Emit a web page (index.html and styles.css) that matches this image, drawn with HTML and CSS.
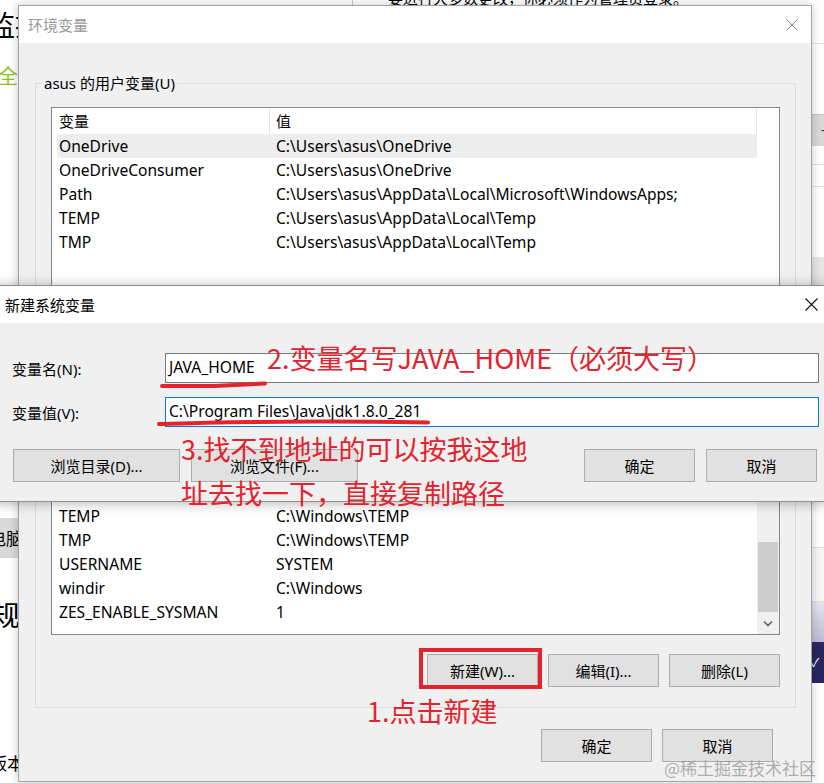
FILE: index.html
```html
<!DOCTYPE html>
<html lang="zh-CN">
<head>
<meta charset="utf-8">
<title>环境变量</title>
<link rel="stylesheet" href="styles.css">
</head>
<body>
<div class="desktop">
  <div class="bg">
    <div class="bg-left">
      <div class="bg-h1">监控</div>
      <div class="bg-link">全</div>
      <div class="bg-tab">电脑</div>
      <div class="bg-h2">常规</div>
      <div class="bg-ver">版本</div>
    </div>
    <div class="bg-mid">
      <div class="bg-notice">要进行大多数更改，你必须作为管理员登录。</div>
    </div>
    <div class="bg-right">
      <div class="br-a"></div>
      <div class="br-gap1"></div>
      <div class="br-btn">-</div>
      <div class="br-gap2"></div>
      <div class="br-line"></div>
      <div class="br-line2"></div>
      <div class="br-band"></div>
      <div class="br-hidden"></div>
      <div class="br-b"></div>
      <div class="br-c"></div>
      <div class="br-lav"></div>
      <div class="br-navy">✓</div>
    </div>
  </div>

  <div class="win env">
    <div class="titlebar">
      <span class="title inactive">环境变量</span>
      <svg class="close close-env" width="12" height="12" viewBox="0 0 12 12"><path d="M0.5 0.5 L11.5 11.5 M11.5 0.5 L0.5 11.5" stroke="#8a8a8a" stroke-width="1" fill="none"/></svg>
    </div>
    <div class="env-body">
      <div class="group">
        <div class="legend">asus 的用户变量(U)</div>
        <div class="list user-list">
          <div class="list-main">
            <div class="lv-head"><span class="h1">变量</span><span class="h2">值</span></div>
            <div class="lv-row sel"><span class="c1">OneDrive</span><span class="c2">C:\Users\asus\OneDrive</span></div>
            <div class="lv-row"><span class="c1">OneDriveConsumer</span><span class="c2">C:\Users\asus\OneDrive</span></div>
            <div class="lv-row"><span class="c1">Path</span><span class="c2">C:\Users\asus\AppData\Local\Microsoft\WindowsApps;</span></div>
            <div class="lv-row"><span class="c1">TEMP</span><span class="c2">C:\Users\asus\AppData\Local\Temp</span></div>
            <div class="lv-row"><span class="c1">TMP</span><span class="c2">C:\Users\asus\AppData\Local\Temp</span></div>
          </div>
          <div class="vspace"></div>
        </div>
        <div class="btn-row">
          <div class="btn">新建(N)...</div>
          <div class="btn">编辑(E)...</div>
          <div class="btn">删除(D)</div>
        </div>
      </div>

      <div class="group sys-group">
        <div class="legend">系统变量(S)</div>
        <div class="list sys-list">
          <div class="list-main">
            <div class="lv-head"><span class="h1">变量</span><span class="h2">值</span></div>
            <div class="lv-rows">
              <div class="lv-row"><span class="c1">PROCESSOR_REVISION</span><span class="c2">8c01</span></div>
              <div class="lv-row"><span class="c1">PSModulePath</span><span class="c2">%ProgramFiles%\WindowsPowerShell\Modules</span></div>
              <div class="lv-row"><span class="c1">TEMP</span><span class="c2">C:\Windows\TEMP</span></div>
              <div class="lv-row"><span class="c1">TMP</span><span class="c2">C:\Windows\TEMP</span></div>
              <div class="lv-row"><span class="c1">USERNAME</span><span class="c2">SYSTEM</span></div>
              <div class="lv-row"><span class="c1">windir</span><span class="c2">C:\Windows</span></div>
              <div class="lv-row"><span class="c1">ZES_ENABLE_SYSMAN</span><span class="c2">1</span></div>
            </div>
          </div>
          <div class="vscroll">
            <div class="vs-arrow"><svg width="22" height="21" viewBox="0 0 22 21"><path d="M7 12 L11 8 L15 12" stroke="#606060" stroke-width="1.6" fill="none"/></svg></div>
            <div class="vs-fill"></div>
            <div class="vs-thumb"></div>
            <div class="vs-arrow down"><svg width="22" height="21" viewBox="0 0 22 21"><path d="M7 8.5 L11 12.5 L15 8.5" stroke="#606060" stroke-width="1.6" fill="none"/></svg></div>
          </div>
        </div>
        <div class="btn-row">
          <div class="btn">新建(W)...</div>
          <div class="btn">编辑(I)...</div>
          <div class="btn">删除(L)</div>
        </div>
      </div>

      <div class="dlg-buttons">
        <div class="btn">确定</div>
        <div class="btn">取消</div>
      </div>
    </div>
  </div>

  <div class="win newvar">
    <div class="titlebar">
      <span class="title">新建系统变量</span>
      <svg class="close close-new" width="13" height="13" viewBox="0 0 13 13"><path d="M0.5 0.5 L12.5 12.5 M12.5 0.5 L0.5 12.5" stroke="#111" stroke-width="1.1" fill="none"/></svg>
    </div>
    <div class="nv-body">
      <div class="field-row">
        <div class="field-label">变量名(N):</div>
        <div class="field-input">JAVA_HOME</div>
      </div>
      <div class="field-row">
        <div class="field-label">变量值(V):</div>
        <div class="field-input focus">C:\Program Files\Java\jdk1.8.0_281</div>
      </div>
      <div class="nv-buttons">
        <div class="btn wide">浏览目录(D)...</div>
        <div class="btn wide">浏览文件(F)...</div>
        <div class="btn push">确定</div>
        <div class="btn">取消</div>
      </div>
    </div>
  </div>

  <svg class="marks" width="824" height="783" viewBox="0 0 824 783">
    <path d="M162 386 L214 386 L265 383.5" stroke="#e3232d" stroke-width="4" stroke-linecap="round" fill="none"/>
    <path d="M159 424 C250 421 340 421 428 422.5" stroke="#e3232d" stroke-width="4" stroke-linecap="round" fill="none"/>
    <rect x="421" y="650" width="119" height="37" stroke="#e3232d" stroke-width="4" fill="none"/>
  </svg>

  <div class="anno anno-2">2.变量名写JAVA_HOME（必须大写）</div>
  <div class="anno anno-3">3.找不到地址的可以按我这地<br>址去找一下，直接复制路径</div>
  <div class="anno anno-1">1.点击新建</div>

  <div class="watermark">@稀土掘金技术社区</div>
</div>
</body>
</html>
```

FILE: styles.css
```css
* { box-sizing: border-box; }
html, body { margin: 0; padding: 0; }
body {
  width: 824px;
  height: 783px;
  overflow: hidden;
  background: #fff;
  font-family: "Noto Sans", "Noto Sans CJK SC", sans-serif;
  font-size: 15px;
  color: #000;
}
.desktop { position: relative; width: 824px; height: 783px; overflow: hidden; }

/* background window fragments */
.bg { display: flex; height: 783px; }
.bg-left { width: 40px; flex: none; font-family: "Noto Sans CJK SC", sans-serif; white-space: nowrap; }
.bg-h1 { margin-top: 7px; margin-left: -13px; font-size: 28px; line-height: 34px; }
.bg-link { margin-top: 23px; margin-left: -2px; font-size: 20px; line-height: 24px; color: #8fbf1f; }
.bg-tab { margin-top: 430px; height: 40px; line-height: 40px; background: #d9d9d9; font-size: 17px; text-indent: -11px; }
.bg-h2 { margin-top: 39px; margin-left: -36px; font-size: 28px; line-height: 34px; }
.bg-ver { margin-top: 120px; margin-left: -10px; font-size: 17px; line-height: 24px; }

.bg-mid { flex: 1; margin-left: 312px; border-left: 1px solid #c8c8c8; height: 8px; }
.bg-notice { margin-top: -12px; padding-left: 35px; line-height: 20px; font-family: "Noto Sans CJK SC", sans-serif; white-space: nowrap; }

.bg-right { width: 13px; flex: none; display: flex; flex-direction: column; }
.br-a { height: 44px; border-bottom: 1px solid #e0e0e0; flex: none; }
.br-gap1 { height: 70px; flex: none; }
.br-btn { height: 32px; flex: none; background: #d9d9d9; border-top: 1px solid #c6c6c6; line-height: 28px; padding-left: 10px; color: #333; overflow: hidden; }
.br-gap2 { height: 18px; flex: none; }
.br-line { height: 22px; flex: none; border-top: 1px solid #dddddd; }
.br-line2 { height: 71px; flex: none; border-top: 1px solid #dddddd; }
.br-band { height: 28px; flex: none; background: #e6e6e6; }
.br-hidden { height: 217px; flex: none; }
.br-b { height: 45px; flex: none; }
.br-c { height: 55px; flex: none; border-top: 1px solid #dddddd; border-bottom: 1px solid #dddddd; background: #f6f6f6; }
.br-lav { height: 40px; flex: none; background: linear-gradient(#e4e4ef, #bebcd6); }
.br-navy { height: 41px; flex: none; background: #29265f; color: #fff; font-size: 12px; line-height: 41px; overflow: hidden; }

/* windows */
.win { position: absolute; display: flex; flex-direction: column; background: #f0f0f0; }
.titlebar {
  height: 37px;
  flex: none;
  background: #fff;
  display: flex;
  align-items: center;
  justify-content: space-between;
  font-family: "Noto Sans CJK SC", sans-serif;
}
.title { line-height: 20px; }
.title.inactive { color: #999; }

.env {
  left: 18px;
  top: 5px;
  width: 794px;
  height: 777px;
  border: 1px solid #a3a3a3;
  box-shadow: 0 0 9px rgba(0, 0, 0, 0.22);
}
.env .titlebar { padding-left: 9px; }
.close-env { margin-right: 13px; }
.env-body { flex: 1; display: flex; flex-direction: column; padding: 40px 15px 0 16px; }

.group { display: flex; flex-direction: column; border: 1px solid #dcdcdc; padding: 0 15px 20px; }
.sys-group { margin-top: 24px; }
.legend {
  align-self: flex-start;
  margin: -11px 0 0 -9px;
  padding: 0 2px;
  height: 20px;
  line-height: 20px;
  background: #f0f0f0;
  white-space: nowrap;
}

.list { margin-top: 14px; border: 1px solid #828790; background: #fff; display: flex; overflow: hidden; font-size: 15.6px; }
.user-list { height: 200px; }
.sys-list { height: 207px; }
.list-main { width: 705px; flex: none; display: flex; flex-direction: column; overflow: hidden; }
.vspace { flex: 1; }

.lv-head { height: 26px; flex: none; display: flex; font-size: 15px; }
.lv-head .h1 { width: 218px; padding-left: 7px; line-height: 26px; border-right: 1px solid #e5e5e5; }
.lv-head .h2 { flex: 1; padding-left: 6px; line-height: 26px; border-right: 1px solid #e5e5e5; }

.lv-row { height: 24px; flex: none; margin-left: 5px; display: flex; line-height: 24px; white-space: nowrap; }
.lv-row .c1 { width: 212px; flex: none; padding-left: 2px; }
.lv-row .c2 { padding-left: 7px; }
.lv-row.sel { background: #ededed; }

.lv-rows { flex: 1; display: flex; flex-direction: column; justify-content: flex-end; padding-bottom: 10px; overflow: hidden; }

.vscroll { width: 22px; flex: none; display: flex; flex-direction: column; background: #f0f0f0; }
.vs-arrow { height: 21px; flex: none; display: flex; }
.vs-fill { flex: 1; }
.vs-thumb { height: 70px; flex: none; margin: 0 1px 1px; background: #cdcdcd; }

.btn {
  width: 111px;
  height: 33px;
  flex: none;
  background: #e1e1e1;
  border: 1px solid #adadad;
  display: flex;
  align-items: center;
  justify-content: center;
  white-space: nowrap;
}
.btn-row { display: flex; justify-content: flex-end; gap: 10px; margin-top: 19px; }
.dlg-buttons { display: flex; justify-content: flex-end; gap: 10px; margin-top: 21px; margin-right: 23px; }

/* new variable dialog */
.newvar {
  left: -6px;
  top: 285px;
  width: 834px;
  height: 217px;
  border: 1px solid #8f8f8f;
  box-shadow: 0 1px 12px rgba(0, 0, 0, 0.3);
}
.newvar .titlebar { padding-left: 10px; }
.close-new { margin-right: 9px; }
.nv-body { flex: 1; display: flex; flex-direction: column; padding: 30px 8px 0 17px; }
.field-row { display: flex; align-items: center; height: 30px; }
.field-row + .field-row { margin-top: 14px; }
.field-label { width: 153px; flex: none; }
.field-input {
  flex: 1;
  height: 30px;
  border: 1px solid #7a7a7a;
  background: #fff;
  padding-left: 3px;
  line-height: 27px;
  font-size: 15.6px;
  white-space: nowrap;
}
.field-input.focus { border-color: #0078d7; }
.nv-buttons { display: flex; gap: 11px; margin-top: 22px; padding: 0 2px 0 1px; }
.btn.wide { width: 167px; }
.btn.push { margin-left: auto; }

/* annotations */
.marks { position: absolute; left: 0; top: 0; pointer-events: none; }
.anno {
  position: absolute;
  color: #e3232d;
  font-family: "Noto Sans CJK SC", sans-serif;
  font-size: 27px;
  white-space: nowrap;
}
.anno-2 { left: 267px; top: 340px; line-height: 36px; }
.anno-3 { left: 181px; top: 427px; line-height: 44px; }
.anno-1 { left: 367px; top: 693px; line-height: 36px; }

.watermark {
  position: absolute;
  left: 664px;
  top: 756px;
  font-family: "Noto Sans CJK SC", serif;
  font-size: 17px;
  line-height: 24px;
  color: rgba(150, 150, 150, 0.75);
  white-space: nowrap;
}
```
